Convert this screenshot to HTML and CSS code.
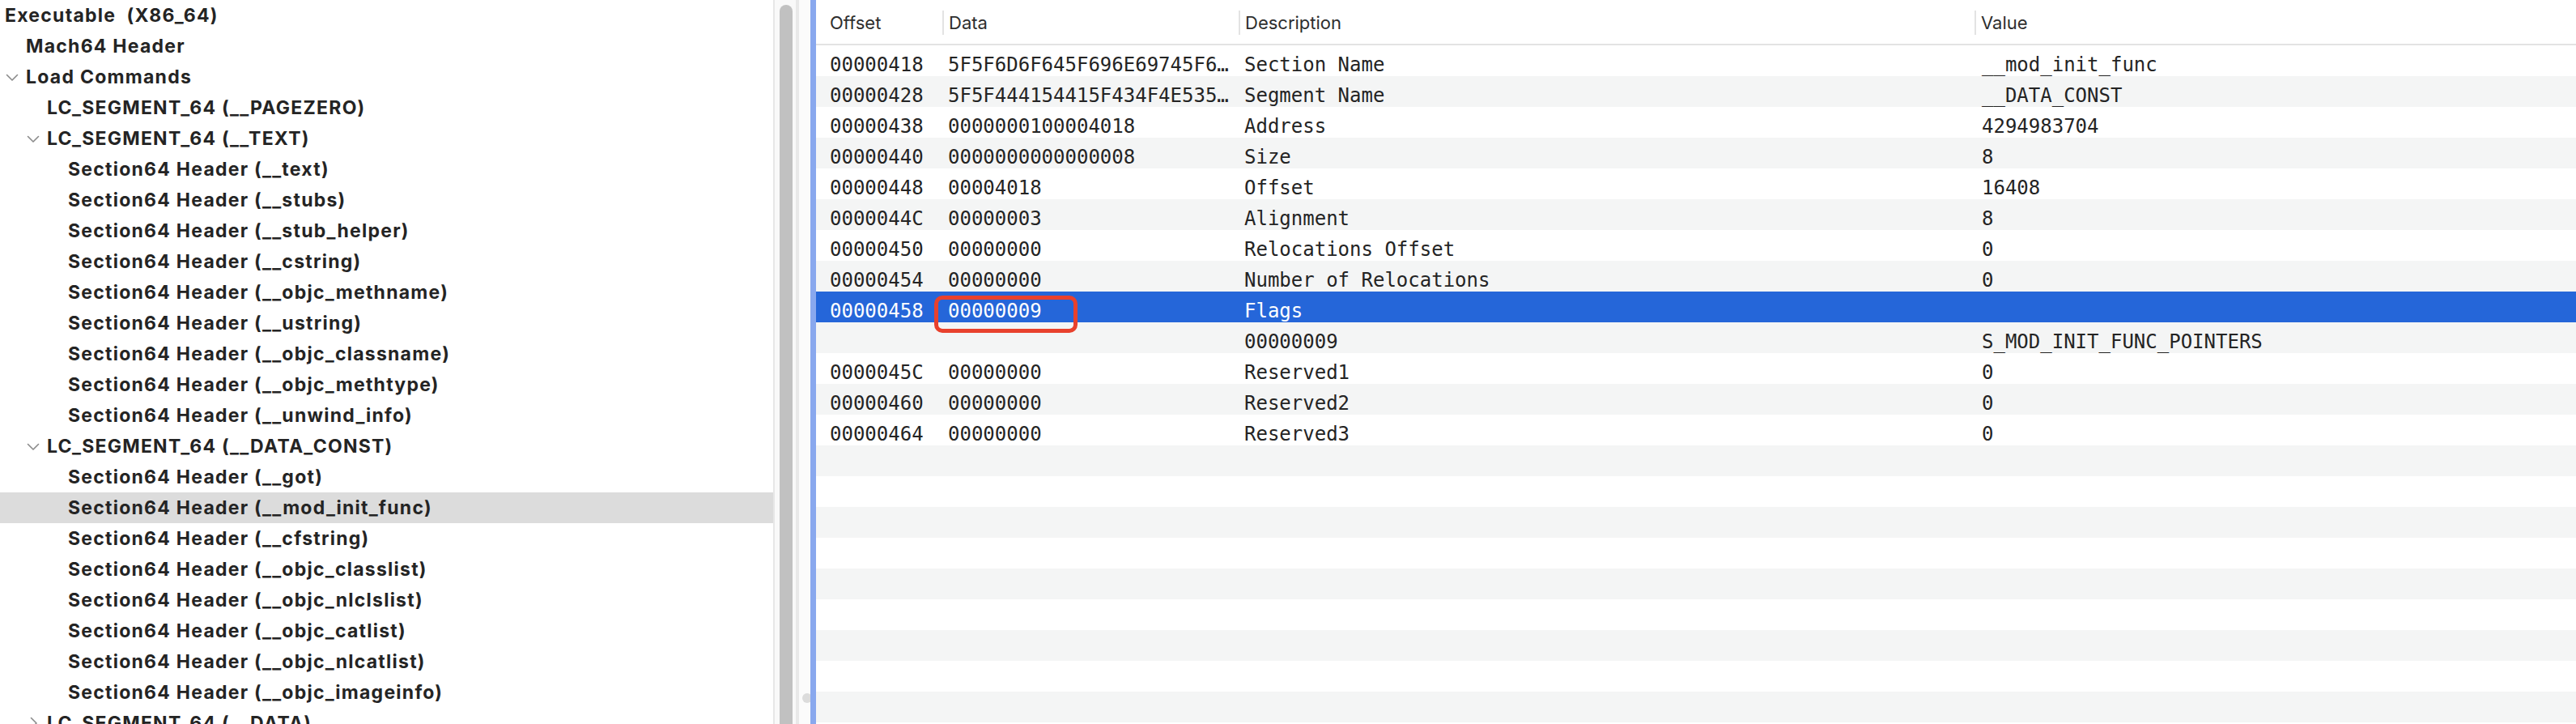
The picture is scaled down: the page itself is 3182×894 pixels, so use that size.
FILE: index.html
```html
<!DOCTYPE html>
<html>
<head>
<meta charset="utf-8">
<link rel="stylesheet" href="styles.css">
</head>
<body>
<div class="app">
  <div class="tree">
    <div class="node l0"><span class="label">Executable  (X86_64)</span></div>
    <div class="node l1"><span class="twisty"></span><span class="label">Mach64 Header</span></div>
    <div class="node l1"><span class="twisty"><svg viewBox="0 0 16 10" class="chev"><path d="M1.5 1.5 L8 8 L14.5 1.5"/></svg></span><span class="label">Load Commands</span></div>
    <div class="node l2"><span class="twisty"></span><span class="label">LC_SEGMENT_64 (__PAGEZERO)</span></div>
    <div class="node l2"><span class="twisty"><svg viewBox="0 0 16 10" class="chev"><path d="M1.5 1.5 L8 8 L14.5 1.5"/></svg></span><span class="label">LC_SEGMENT_64 (__TEXT)</span></div>
    <div class="node l3"><span class="twisty"></span><span class="label">Section64 Header (__text)</span></div>
    <div class="node l3"><span class="twisty"></span><span class="label">Section64 Header (__stubs)</span></div>
    <div class="node l3"><span class="twisty"></span><span class="label">Section64 Header (__stub_helper)</span></div>
    <div class="node l3"><span class="twisty"></span><span class="label">Section64 Header (__cstring)</span></div>
    <div class="node l3"><span class="twisty"></span><span class="label">Section64 Header (__objc_methname)</span></div>
    <div class="node l3"><span class="twisty"></span><span class="label">Section64 Header (__ustring)</span></div>
    <div class="node l3"><span class="twisty"></span><span class="label">Section64 Header (__objc_classname)</span></div>
    <div class="node l3"><span class="twisty"></span><span class="label">Section64 Header (__objc_methtype)</span></div>
    <div class="node l3"><span class="twisty"></span><span class="label">Section64 Header (__unwind_info)</span></div>
    <div class="node l2"><span class="twisty"><svg viewBox="0 0 16 10" class="chev"><path d="M1.5 1.5 L8 8 L14.5 1.5"/></svg></span><span class="label">LC_SEGMENT_64 (__DATA_CONST)</span></div>
    <div class="node l3"><span class="twisty"></span><span class="label">Section64 Header (__got)</span></div>
    <div class="node l3 selected"><span class="twisty"></span><span class="label">Section64 Header (__mod_init_func)</span></div>
    <div class="node l3"><span class="twisty"></span><span class="label">Section64 Header (__cfstring)</span></div>
    <div class="node l3"><span class="twisty"></span><span class="label">Section64 Header (__objc_classlist)</span></div>
    <div class="node l3"><span class="twisty"></span><span class="label">Section64 Header (__objc_nlclslist)</span></div>
    <div class="node l3"><span class="twisty"></span><span class="label">Section64 Header (__objc_catlist)</span></div>
    <div class="node l3"><span class="twisty"></span><span class="label">Section64 Header (__objc_nlcatlist)</span></div>
    <div class="node l3"><span class="twisty"></span><span class="label">Section64 Header (__objc_imageinfo)</span></div>
    <div class="node l2"><span class="twisty"><svg viewBox="0 0 10 16" class="chev-r"><path d="M1.5 1.5 L8 8 L1.5 14.5"/></svg></span><span class="label">LC_SEGMENT_64 (__DATA)</span></div>
  </div>
  <div class="vscroll"><div class="thumb"></div></div>
  <div class="splitter"><div class="handle"></div></div>
  <div class="table">
    <div class="row head">
      <div class="hcell first"><span class="htext">Offset</span></div>
      <div class="hcell"><span class="htext sep">Data</span></div>
      <div class="hcell"><span class="htext sep">Description</span></div>
      <div class="hcell"><span class="htext sep">Value</span></div>
    </div>
    <div class="row"><div class="cell first">00000418</div><div class="cell data">5F5F6D6F645F696E69745F66756E6300</div><div class="cell">Section Name</div><div class="cell val">__mod_init_func</div></div>
    <div class="row alt"><div class="cell first">00000428</div><div class="cell data">5F5F444154415F434F4E535400000000</div><div class="cell">Segment Name</div><div class="cell val">__DATA_CONST</div></div>
    <div class="row"><div class="cell first">00000438</div><div class="cell data">0000000100004018</div><div class="cell">Address</div><div class="cell val">4294983704</div></div>
    <div class="row alt"><div class="cell first">00000440</div><div class="cell data">0000000000000008</div><div class="cell">Size</div><div class="cell val">8</div></div>
    <div class="row"><div class="cell first">00000448</div><div class="cell data">00004018</div><div class="cell">Offset</div><div class="cell val">16408</div></div>
    <div class="row alt"><div class="cell first">0000044C</div><div class="cell data">00000003</div><div class="cell">Alignment</div><div class="cell val">8</div></div>
    <div class="row"><div class="cell first">00000450</div><div class="cell data">00000000</div><div class="cell">Relocations Offset</div><div class="cell val">0</div></div>
    <div class="row alt"><div class="cell first">00000454</div><div class="cell data">00000000</div><div class="cell">Number of Relocations</div><div class="cell val">0</div></div>
    <div class="row sel"><div class="cell first">00000458</div><div class="cell data">00000009</div><div class="cell">Flags</div><div class="cell val"></div></div>
    <div class="row alt"><div class="cell first"></div><div class="cell data"></div><div class="cell">00000009</div><div class="cell val">S_MOD_INIT_FUNC_POINTERS</div></div>
    <div class="row"><div class="cell first">0000045C</div><div class="cell data">00000000</div><div class="cell">Reserved1</div><div class="cell val">0</div></div>
    <div class="row alt"><div class="cell first">00000460</div><div class="cell data">00000000</div><div class="cell">Reserved2</div><div class="cell val">0</div></div>
    <div class="row"><div class="cell first">00000464</div><div class="cell data">00000000</div><div class="cell">Reserved3</div><div class="cell val">0</div></div>
    <div class="row alt"></div>
    <div class="row"></div>
    <div class="row alt"></div>
    <div class="row"></div>
    <div class="row alt"></div>
    <div class="row"></div>
    <div class="row alt"></div>
    <div class="row"></div>
    <div class="row alt"></div>
    <div class="annot"></div>
  </div>
</div>
</body>
</html>
```

FILE: styles.css
```css
html, body {
  margin: 0;
  padding: 0;
  background: #ffffff;
  overflow: hidden;
}

.app {
  display: flex;
  width: 3182px;
  height: 894px;
  overflow: hidden;
}

/* ---------- outline tree ---------- */
.tree {
  width: 955px;
  flex: none;
  height: 894px;
  overflow: hidden;
  background: #ffffff;
}

.node {
  height: 38px;
  display: flex;
  align-items: center;
  font-family: "Inter", "Liberation Sans", sans-serif;
  font-weight: 700;
  font-size: 23px;
  letter-spacing: 1.25px;
  color: #242424;
  white-space: pre;
  box-sizing: border-box;
}

.node.selected {
  background: #dcdcdc;
}

.l0 { padding-left: 6px; }
.l1 { padding-left: 6px; }
.l2 { padding-left: 32px; }
.l3 { padding-left: 58px; }

.twisty {
  width: 26px;
  flex: none;
  display: flex;
  align-items: center;
}

.chev {
  width: 16px;
  height: 10px;
  margin-left: 1px;
  margin-top: 2px;
  fill: none;
  stroke: #8a8a8a;
  stroke-width: 1.6;
  stroke-linecap: round;
  stroke-linejoin: round;
}

.chev-r {
  width: 10px;
  height: 16px;
  margin-left: 5px;
  fill: none;
  stroke: #8a8a8a;
  stroke-width: 1.6;
  stroke-linecap: round;
  stroke-linejoin: round;
}

/* ---------- scroller & splitter ---------- */
.vscroll {
  width: 20px;
  flex: none;
  border-left: 2px solid #e7e7e7;
  background: #f9f9f9;
  padding: 6px 0 0 6px;
  box-sizing: content-box;
  height: 888px;
}

.thumb {
  width: 16px;
  height: 900px;
  background: #c1c1c1;
  border-radius: 8px;
}

.splitter {
  width: 14px;
  flex: none;
  border-left: 4px solid #e9e9e9;
  background: #fbfbfb;
  position: relative;
}

.handle {
  position: absolute;
  left: 4px;
  top: 856px;
  width: 12px;
  height: 12px;
  border-radius: 50%;
  background: #dcdcdc;
}

/* ---------- table ---------- */
.table {
  flex: 1;
  position: relative;
  border-left: 7px solid #89a8ee;
  height: 894px;
  overflow: hidden;
}

.row {
  display: grid;
  grid-template-columns: 156px 366px 909px 1fr;
  height: 38px;
  background: #ffffff;
}

.row.alt {
  background: #f4f5f5;
}

.row.sel {
  background: #2566d9;
  color: #ffffff;
}

.row.head {
  height: 56px;
  box-sizing: border-box;
  border-bottom: 2px solid #e3e3e3;
}

.hcell {
  padding-top: 13px;
  padding-left: 0;
}

.hcell.first {
  padding-left: 17px;
}

.htext {
  display: block;
  height: 30px;
  line-height: 30px;
  font-family: "Inter", "Liberation Sans", sans-serif;
  font-size: 22px;
  color: #2e2e2e;
}

.htext.sep {
  border-left: 2px solid #e3e3e3;
  padding-left: 6px;
}

.cell {
  font-family: "DejaVu Sans Mono", "Liberation Mono", monospace;
  font-size: 24px;
  line-height: 28px;
  padding: 10px 6px 0 7px;
  box-sizing: border-box;
  height: 38px;
  white-space: pre;
  overflow: hidden;
  text-overflow: ellipsis;
  color: #242424;
}

.row.sel .cell {
  color: #ffffff;
}

.cell.first {
  padding-left: 17px;
}

.cell.val {
  padding-left: 9px;
}

.annot {
  position: absolute;
  left: 146px;
  top: 365px;
  width: 177px;
  height: 46px;
  box-sizing: border-box;
  border: 5px solid #e8412d;
  border-radius: 10px;
}
```
